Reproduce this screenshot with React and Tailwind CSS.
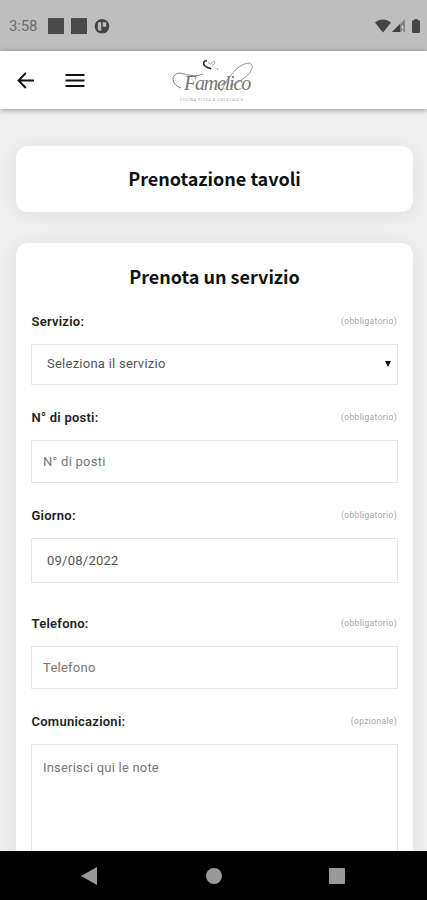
const fields = [
    { label: 'Servizio:', note: '(obbligatorio)', text: 'Seleziona il servizio', box: 'h-[41px] pb-px pl-[15px] text-[#555]', gap: 'mb-5', select: true },
    { label: 'N° di posti:', note: '(obbligatorio)', text: 'N° di posti', box: 'h-[43px] pl-[11px] text-[#777]', gap: 'mb-5' },
    { label: 'Giorno:', note: '(obbligatorio)', text: '09/08/2022', box: 'h-[45px] pl-[15px] text-[#555]', gap: 'mb-7' },
    { label: 'Telefono:', note: '(obbligatorio)', text: 'Telefono', box: 'h-[43px] pl-[11px] text-[#777]', gap: 'mb-5' },
];

function StatusBar() {
    return (
        <div className="flex h-[51px] shrink-0 items-center bg-[#bebebe] pl-[9px] pr-[7px] pt-[2px] text-[#444]">
            <span className="w-[39px] text-[15px] tracking-[-0.2px] text-[#6c6c6c]">3:58</span>
            <span className="-mt-px h-4 w-4 bg-[#4a4a4a]" />
            <span className="-mt-px ml-[7px] h-4 w-4 bg-[#4a4a4a]" />
            <svg className="ml-[7px] h-4 w-4" viewBox="0 0 16 16">
                <circle cx="8" cy="7.3" r="7.3" fill="#444" />
                <path d="M4.500 3.300H7.200V11.800H5.500Q3.900 11.500 3.900 9.500V4Z" fill="#bebebe" />
                <rect x="8.700" y="3.300" width="3.500" height="4.400" rx="0.500" fill="#bebebe" />
            </svg>
            <svg className="mb-[2px] ml-auto h-[14px] w-4" viewBox="0 0 16 14" fill="currentColor">
                <path d="M0 3.600C4.500-.4 11.500-.4 16 3.600L8 13.500Z" />
            </svg>
            <svg className="mb-[1px] ml-[1px] h-[14px] w-[14px]" viewBox="0 0 14 14">
                <path d="M0 13 13 0V13Z" fill="#858585" />
                <path d="M0 13 8 5V13Z" fill="#3f3f3f" />
                <path d="M10.500 6.500V10M10.500 11.200V13" stroke="#d2d2d2" strokeWidth="1.500" />
            </svg>
            <svg className="mb-[2px] ml-[6px] h-[14px] w-2" viewBox="0 0 8 14" fill="currentColor">
                <path d="M2.500 0H5.500V1.300H7Q8 1.300 8 2.300V13Q8 14 7 14H1Q0 14 0 13V2.300Q0 1.300 1 1.300H2.500Z" />
            </svg>
        </div>
    );
}

function Logo() {
    return (
        <div className="relative ml-[84px] h-[58px] w-[90px] text-[#777]">
            <svg className="absolute inset-0" width="90" height="58" viewBox="0 0 90 58" fill="none" stroke="currentColor">
                <path d="M38 10C34 9 34 13 36 15C38 17 41 17 42 18" stroke="#222" strokeWidth="1.500" />
                <path d="M39 11C40 12 41 14 42 13C43 11 46 9 46 11C46 13 44 14 43 14" strokeWidth="0.700" />
                <path d="M48 17L49 19" strokeWidth="0.700" />
                <path d="M12 37C6 35 2 29 5 25C10 17 20 29 34 23" strokeWidth="0.900" />
                <path d="M52 40C57 31 66 14 79 12C89 13 81 27 61 35" strokeWidth="0.800" />
            </svg>
            <span className="absolute left-[15px] top-[18px] font-['Liberation_Serif',serif] text-[20px] italic leading-[29px] tracking-[-1.2px]">Famelico</span>
            <span className="absolute left-[11px] top-[47px] whitespace-nowrap text-[3.500px] leading-[5px] tracking-[0.700px] text-[#999]">CUCINA PIZZA &amp; COCKTAIL'S</span>
        </div>
    );
}

function Header() {
    return (
        <div className="relative z-10 flex h-[58px] shrink-0 items-center bg-white pl-[17px] shadow-[0_1px_5px_rgba(0,0,0,0.4)]">
            <svg className="h-[18px] w-[18px]" viewBox="0 0 18 18" fill="none" stroke="#111" strokeWidth="1.900">
                <path d="M17 9.500H2M8.800 2 1.500 9.500 8.800 17" />
            </svg>
            <svg className="ml-[30px] h-[14px] w-5" viewBox="0 0 20 14" fill="none" stroke="#111" strokeWidth="2">
                <path d="M.5 2H19.500M.5 7.500H19.500M.5 13H19.500" />
            </svg>
            <Logo />
        </div>
    );
}

function FieldLabel({ label, note }) {
    return (
        <div className="flex h-6 items-center justify-between pl-[0.500px] pr-[1px] pt-[1px]">
            <span className="text-[13px] font-semibold tracking-[0.25px] text-[#222]">{label}</span>
            <span className="text-[8.500px] tracking-[0.35px] text-[#a5a5a5]">{note}</span>
        </div>
    );
}

function Field({ label, note, text, box, gap, select }) {
    return (
        <div className={gap}>
            <FieldLabel label={label} note={note} />
            <div className={`mt-[11px] flex items-center justify-between border border-[#e6e6e6] pr-[6px] text-[13px] ${box}`}>
                <span className="tracking-[0.25px]">{text}</span>
                {select && (
                    <svg className="h-[6px] w-[6px]" viewBox="0 0 6 6">
                        <path d="M0 0H6L3 6Z" fill="#111" />
                    </svg>
                )}
            </div>
        </div>
    );
}

function NavBar() {
    return (
        <div className="relative z-10 flex h-[49px] shrink-0 items-center bg-black pl-[81px] text-[#999]">
            <svg className="h-[18px] w-4" viewBox="0 0 16 18" fill="currentColor">
                <path d="M0 9 16 0V18Z" />
            </svg>
            <span className="ml-[109px] h-4 w-4 rounded-full bg-[#999]" />
            <span className="ml-[107px] h-4 w-4 rounded-[1px] bg-[#999]" />
        </div>
    );
}

function App() {
    return (
        <div className="flex h-[900px] w-[427px] flex-col overflow-hidden bg-[#efefef] font-[Roboto,sans-serif]">
            <StatusBar />
            <Header />
            <div className="min-h-0 flex-1 overflow-hidden pl-4 pr-[14px] pt-[37px]">
                <div className="flex h-[66px] items-center justify-center rounded-[12px] bg-white pb-[2px] shadow-[0_2px_20px_rgba(0,0,0,0.07)]">
                    <h1 className="font-['Noto_Sans_CJK_SC',sans-serif] text-[18px] font-bold leading-8 text-[#111]">Prenotazione tavoli</h1>
                </div>
                <div className="mt-[31px] h-[700px] rounded-[12px] bg-white px-[15px] pt-[17px] shadow-[0_2px_20px_rgba(0,0,0,0.07)]">
                    <h2 className="mb-[17px] text-center font-['Noto_Sans_CJK_SC',sans-serif] text-[18px] font-bold leading-8 text-[#111]">Prenota un servizio</h2>
                    {fields.map((field) => (
                        <Field key={field.label} {...field} />
                    ))}
                    <FieldLabel label="Comunicazioni:" note="(opzionale)" />
                    <div className="mt-[11px] h-[180px] border border-[#e6e6e6] pl-[11px] pt-[13px] text-[13px] leading-5 tracking-[0.2px] text-[#777]">
                        Inserisci qui le note
                    </div>
                </div>
            </div>
            <NavBar />
        </div>
    );
}

export default App;
